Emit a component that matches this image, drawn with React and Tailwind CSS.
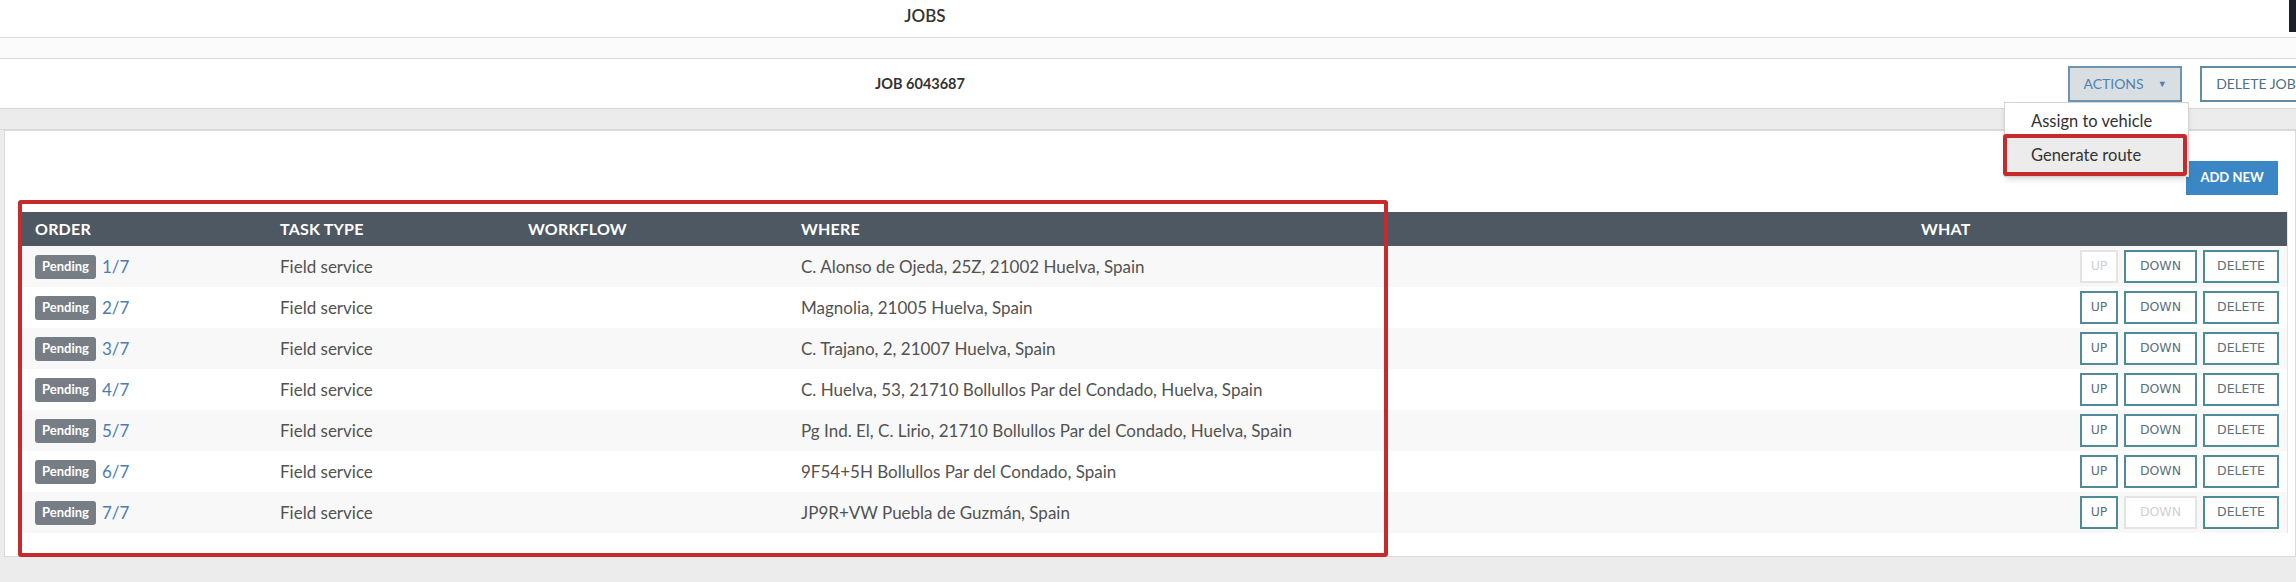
import React from 'react';

const rows = [
  { n: '1/7', where: 'C. Alonso de Ojeda, 25Z, 21002 Huelva, Spain', upOff: true },
  { n: '2/7', where: 'Magnolia, 21005 Huelva, Spain' },
  { n: '3/7', where: 'C. Trajano, 2, 21007 Huelva, Spain' },
  { n: '4/7', where: 'C. Huelva, 53, 21710 Bollullos Par del Condado, Huelva, Spain' },
  { n: '5/7', where: 'Pg Ind. El, C. Lirio, 21710 Bollullos Par del Condado, Huelva, Spain' },
  { n: '6/7', where: '9F54+5H Bollullos Par del Condado, Spain' },
  { n: '7/7', where: 'JP9R+VW Puebla de Guzmán, Spain', downOff: true },
];

const RowButton = ({ label, off, w }) => (
  <button
    className={`${w} h-[33px] border-2 bg-white text-[12.5px] font-['DejaVu_Sans',sans-serif] ${
      off ? 'border-[#e4e4e4] text-[#d0d0d0]' : 'border-[#4f8b96] text-[#5a717c]'
    }`}
  >
    {label}
  </button>
);

export default function App() {
  return (
    <div className="relative w-[2296px] h-[582px] overflow-hidden bg-[#ececec] font-['Lato',sans-serif] text-[#444]">
      {/* top bar */}
      <div className="h-[38px] bg-white border-b border-[#dedede] flex items-center">
        <div className="w-[1850px] text-center text-[17px] font-semibold text-[#333] pb-[6px]">JOBS</div>
        <div className="ml-auto w-[7px] h-[32px] self-start bg-[#1b2027]" />
      </div>
      <div className="h-[21px] bg-[#fbfbfb] border-b border-[#dcdcdc]" />

      {/* job header */}
      <div className="h-[50px] bg-white border-b border-[#d6d6d6] flex items-center">
        <div className="w-[1840px] text-center text-[14.5px] font-bold text-[#333]">JOB 6043687</div>
        <div className="ml-auto flex items-center gap-[18px] -mr-[16px]">
          <button className="w-[114px] h-[36px] bg-[#d9dee3] border-2 border-[#6d95b3] text-[14px] text-[#4f82ad] flex items-center justify-center gap-[14px]">
            <span>ACTIONS</span>
            <span className="text-[9px] text-[#4f82ad]">▼</span>
          </button>
          <button className="w-[112px] h-[36px] bg-white border-2 border-[#5e8ea3] text-[14px] text-[#4f6f84] whitespace-nowrap">
            DELETE JOB
          </button>
        </div>
      </div>
      <div className="h-[21px] bg-[#ececec] border-b border-[#d8d8d8]" />

      {/* main panel */}
      <div className="ml-[4px] h-[427px] bg-white border border-[#dadada] pl-[17px] pr-[7px] flex flex-col">
        <div className="h-[81px] flex justify-end items-start pt-[30px] pr-[10px]">
          <button className="w-[92px] h-[34px] bg-[#3b87c6] text-white text-[13px] font-bold">ADD NEW</button>
        </div>
        <table className="w-full table-fixed border-collapse border-r border-[#e6e6e6]">
          <colgroup>
            <col className="w-[258px]" />
            <col className="w-[248px]" />
            <col className="w-[273px]" />
            <col className="w-[1120px]" />
            <col />
          </colgroup>
          <thead>
            <tr className="h-[34px] bg-[#4e5862] text-white text-[16px] text-left tracking-[0.2px]">
              <th className="pl-[13px] font-bold">ORDER</th>
              <th className="font-bold">TASK TYPE</th>
              <th className="font-bold">WORKFLOW</th>
              <th className="font-bold">WHERE</th>
              <th className="font-bold">WHAT</th>
            </tr>
          </thead>
          <tbody>
            {rows.map((r, i) => (
              <tr key={r.n} className={`h-[41px] text-[17px] text-[#525252] ${i % 2 === 0 ? 'bg-[#f8f8f8]' : 'bg-white'}`}>
                <td className="pl-[13px]">
                  <div className="flex items-center gap-[6px]">
                    <span className="h-[24px] px-[7px] rounded-[3px] bg-[#767d84] text-white text-[13px] font-bold flex items-center">
                      Pending
                    </span>
                    <span className="text-[#4a7db3]">{r.n}</span>
                  </div>
                </td>
                <td>Field service</td>
                <td />
                <td>{r.where}</td>
                <td className="pr-[8px]">
                  <div className="flex justify-end gap-[6px]">
                    <RowButton label="UP" off={r.upOff} w="w-[38px]" />
                    <RowButton label="DOWN" off={r.downOff} w="w-[73px]" />
                    <RowButton label="DELETE" w="w-[76px]" />
                  </div>
                </td>
              </tr>
            ))}
          </tbody>
        </table>
      </div>

      {/* actions dropdown */}
      <div className="absolute left-[2004px] top-[102px] w-[185px] bg-white border border-[#d4d4d4] shadow-md py-[3px] text-[16.5px] text-[#333]">
        <div className="h-[31px] flex items-center pl-[26px]">Assign to vehicle</div>
        <div className="h-[36px] flex items-center pl-[26px] bg-[#ececec]">Generate route</div>
      </div>
      <div className="absolute left-[2003px] top-[134px] w-[184px] h-[42px] border-[4px] border-[#c62a2a] rounded-[3px]" />

      {/* highlight around table */}
      <div className="absolute left-[18px] top-[200px] w-[1370px] h-[357px] border-[4px] border-[#c62a2a] rounded-[3px]" />
    </div>
  );
}
